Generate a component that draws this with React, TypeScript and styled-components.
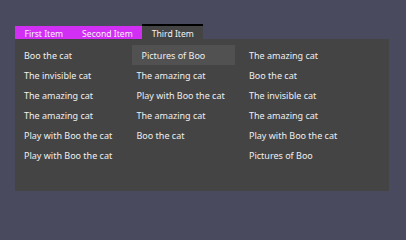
import React from "react";
import styled, { createGlobalStyle } from "styled-components";

const GlobalStyle = createGlobalStyle`
    html, body {
        margin: 0;
        padding: 0;
        background: #4a4a5f;
    }
    body {
        font-family: "Noto Sans", "Open Sans", sans-serif;
    }
`

const Page = styled.div`
    width: 406px;
    height: 240px;
    padding: 24px 17px 0 15px;
    box-sizing: border-box;
`

const TabBar = styled.ul`
    display: flex;
    margin: 0;
    padding: 0;
    list-style: none;
    height: 15px;
`

const Tab = styled.li<{ $active?: boolean }>`
    height: 13px;
    padding: 0 9.5px;
    font-size: 8.6px;
    line-height: 16px;
    color: #f2f2f2;
    border-top: 2px solid ${props => props.$active ? "#000" : "#4a4a5f"};
    background: ${props => props.$active ? "#444444" : "#d22ff4"};
    cursor: pointer;
`

const Panel = styled.div`
    display: grid;
    grid-template-columns: repeat(3, 103px);
    column-gap: 9.5px;
    align-content: start;
    height: 152px;
    padding: 6px 0 0 4px;
    box-sizing: border-box;
    background: #444444;
`

const Column = styled.ul`
    margin: 0;
    padding: 0;
    list-style: none;
`

const Item = styled.li<{ $selected?: boolean }>`
    height: 20px;
    line-height: 21px;
    padding-left: ${props => props.$selected ? "10px" : "5px"};
    font-size: 9px;
    color: #eeeeee;
    white-space: nowrap;
    background: ${props => props.$selected ? "#515151" : "transparent"};
`

const columns = [
    ["Boo the cat", "The invisible cat", "The amazing cat", "The amazing cat", "Play with Boo the cat", "Play with Boo the cat"],
    ["Pictures of Boo", "The amazing cat", "Play with Boo the cat", "The amazing cat", "Boo the cat"],
    ["The amazing cat", "Boo the cat", "The invisible cat", "The amazing cat", "Play with Boo the cat", "Pictures of Boo"],
]

const tabs = ["First Item", "Second Item", "Third Item"]

export default function App() {
    const active = 2
    const selected = { col: 1, row: 0 }

    return (
        <>
            <GlobalStyle />
            <Page>
                <TabBar>
                    {tabs.map((t, i) => (
                        <Tab key={i} $active={i === active}>{t}</Tab>
                    ))}
                </TabBar>
                <Panel>
                    {columns.map((col, c) => (
                        <Column key={c}>
                            {col.map((text, r) => (
                                <Item key={r} $selected={c === selected.col && r === selected.row}>{text}</Item>
                            ))}
                        </Column>
                    ))}
                </Panel>
            </Page>
        </>
    )
}
